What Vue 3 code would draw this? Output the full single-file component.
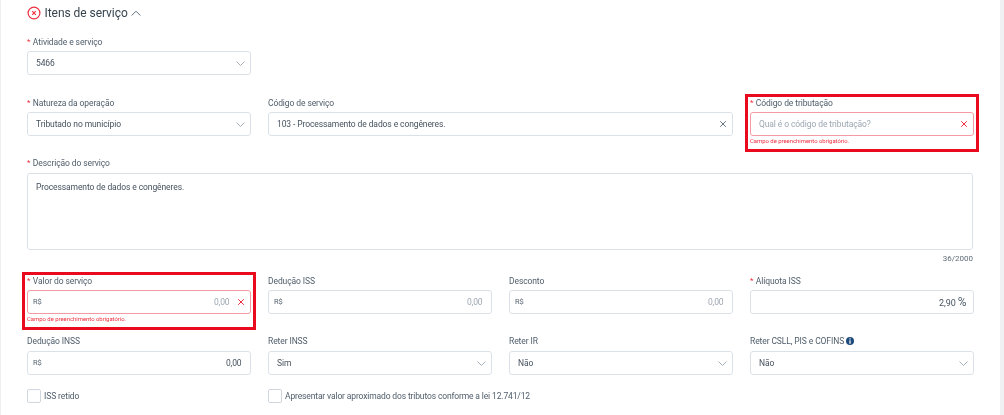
<script setup>
const rowD = [
  { label: 'Dedução INSS', kind: 'money', value: '0,00', dark: true },
  { label: 'Reter INSS', kind: 'select', value: 'Sim' },
  { label: 'Reter IR', kind: 'select', value: 'Não' },
  { label: 'Reter CSLL, PIS e COFINS', kind: 'select', value: 'Não', info: true },
]
</script>

<template>
  <div class="page">
    <main class="content">
      <header class="title">
        <svg class="err-icon" width="14" height="14" viewBox="0 0 14 14" fill="none">
          <circle cx="7" cy="7" r="5.9" stroke="#ee2e3e" stroke-width="1.2" />
          <path d="M5.2 5.2l3.6 3.6M8.8 5.2l-3.6 3.6" stroke="#ee2e3e" stroke-width="1.1" />
        </svg>
        <h2>Itens de serviço</h2>
        <svg width="10" height="6" viewBox="0 0 10 6" fill="none">
          <path d="M.7 5.5L5 1.2l4.3 4.3" stroke="#5f6f7f" stroke-width="1" />
        </svg>
      </header>

      <div class="grid row-a">
        <div class="field">
          <label><i>*</i>Atividade e serviço</label>
          <div class="box"><span>5466</span><svg class="chev" width="9" height="5" viewBox="0 0 9 5" fill="none"><path d="M.5.5l4 4 4-4" /></svg></div>
        </div>
      </div>

      <div class="grid row-b">
        <div class="field">
          <label><i>*</i>Natureza da operação</label>
          <div class="box"><span>Tributado no município</span><svg class="chev" width="9" height="5" viewBox="0 0 9 5" fill="none"><path d="M.5.5l4 4 4-4" /></svg></div>
        </div>
        <div class="field span2">
          <label>Código de serviço</label>
          <div class="box"><span>103 - Processamento de dados e congêneres.</span><svg class="x" width="8" height="8" viewBox="0 0 8 8" fill="none"><path d="M1.2 1.2l5.6 5.6M6.8 1.2L1.2 6.8" /></svg></div>
        </div>
        <div class="field flagged">
          <label><i>*</i>Código de tributação</label>
          <div class="box invalid"><span class="ph">Qual é o código de tributação?</span><svg class="x" width="8" height="8" viewBox="0 0 8 8" fill="none"><path d="M1.2 1.2l5.6 5.6M6.8 1.2L1.2 6.8" /></svg></div>
          <small>Campo de preenchimento obrigatório.</small>
        </div>
      </div>

      <div class="field desc">
        <label><i>*</i>Descrição do serviço</label>
        <div class="area">Processamento de dados e congêneres.</div>
        <div class="count">36/2000</div>
      </div>

      <div class="grid row-c">
        <div class="field flagged">
          <label><i>*</i>Valor do serviço</label>
          <div class="box invalid"><b>R$</b><span class="num ph">0,00</span><svg class="x" width="8" height="8" viewBox="0 0 8 8" fill="none"><path d="M1.2 1.2l5.6 5.6M6.8 1.2L1.2 6.8" /></svg></div>
          <small>Campo de preenchimento obrigatório.</small>
        </div>
        <div class="field">
          <label>Dedução ISS</label>
          <div class="box"><b>R$</b><span class="num ph">0,00</span></div>
        </div>
        <div class="field">
          <label>Desconto</label>
          <div class="box"><b>R$</b><span class="num ph">0,00</span></div>
        </div>
        <div class="field">
          <label><i>*</i>Alíquota ISS</label>
          <div class="box"><span class="num pct">2,90 <em>%</em></span></div>
        </div>
      </div>

      <div class="grid row-d">
        <div v-for="f in rowD" :key="f.label" class="field">
          <label>{{ f.label }}<svg v-if="f.info" class="info" width="8" height="8" viewBox="0 0 8 8"><circle cx="4" cy="4" r="4" fill="#1d4a7c" /><path d="M3.4 1.3h1.2v1.1H3.4zM3.4 3.2h1.2v3.5H3.4z" fill="#fff" /></svg></label>
          <div v-if="f.kind === 'money'" class="box"><b>R$</b><span class="num">{{ f.value }}</span></div>
          <div v-else class="box"><span>{{ f.value }}</span><svg class="chev" width="9" height="5" viewBox="0 0 9 5" fill="none"><path d="M.5.5l4 4 4-4" /></svg></div>
        </div>
      </div>

      <div class="grid row-e">
        <div class="check"><span class="tick"></span>ISS retido</div>
        <div class="check wide"><span class="tick"></span>Apresentar valor aproximado dos tributos conforme a lei 12.741/12</div>
      </div>
    </main>
  </div>
</template>

<style>
html, body { margin: 0; background: #fff; }
</style>

<style scoped>
.page {
  width: 1004px;
  height: 415px;
  overflow: hidden;
  box-sizing: border-box;
  background: #fff;
  border-left: 1px solid #f0f0f0;
  border-right: 4px solid #f0f1f3;
  font-family: Roboto, "Liberation Sans", sans-serif;
  color: #4d5a68;
  letter-spacing: -0.1px;
}
.content { padding-left: 26px; box-sizing: border-box; width: 972px; filter: blur(0.3px); }
.title {
  display: flex;
  align-items: center;
  height: 26px;
  gap: 3.5px;
}
.title h2 {
  margin: 0;
  font-size: 12px;
  font-weight: 400;
  color: #37444f;
  line-height: 26px;
  letter-spacing: -0.05px;
}
.grid {
  display: grid;
  grid-template-columns: repeat(4, 223.5px);
  column-gap: 17.5px;
}
.row-a { margin-top: 9px; }
.row-b { margin-top: 21px; height: 38px; }
.row-c { margin-top: 9px; height: 40px; }
.row-d { margin-top: 20px; }
.row-e { margin-top: 13.5px; }
.span2 { grid-column: span 2; }
.field { position: relative; min-width: 0; }
label {
  display: flex;
  align-items: center;
  height: 14px;
  margin-bottom: 2px;
  font-size: 8.5px;
  color: #4f5d6a;
  line-height: 14px;
}
.row-d label, .desc label { margin-bottom: 3px; }
label i {
  color: #ee2e3e;
  font-style: normal;
  margin-right: 2.5px;
  font-size: 8px;
}
.info { margin-left: 2px; }
.box {
  height: 24px;
  box-sizing: border-box;
  border: 1px solid #dbe1e8;
  border-radius: 3px;
  display: flex;
  align-items: center;
  padding: 0 8px;
  font-size: 8.5px;
  color: #46525e;
  background: #fff;
}
.box span { flex: 1; white-space: nowrap; }
.box b { font-weight: 400; font-size: 7.5px; color: #55626e; margin-top: -1px; margin-left: -3px; }
.num { text-align: right; }
.pct { margin-right: -2px; font-size: 9px; }
.num em { font-style: normal; font-size: 12px; color: #55626e; }
.ph { color: #9ca7b2; }
.chev path { stroke: #a5b0bb; stroke-width: 1; }
.chev { margin-right: -3px; margin-left: 6px; }
.x { margin-left: 7px; margin-right: -3px; }
.x path { stroke: #6a7784; stroke-width: 1; }
.invalid { border-color: #f59aa2; }
.invalid .x path { stroke: #ee2e3e; }
small {
  display: block;
  font-size: 5.9px;
  color: #ee2e3e;
  line-height: 10px;
  letter-spacing: 0;
}
.flagged::after {
  content: "";
  position: absolute;
  inset: -2px -5.5px -6px -5px;
  border: 3px solid #ea0a1e;
  pointer-events: none;
}
.desc { margin-top: 22px; }
.area {
  height: 77px;
  box-sizing: border-box;
  border: 1px solid #dbe1e8;
  border-radius: 3px;
  padding: 6px 8px;
  font-size: 8.5px;
  line-height: 14px;
  color: #46525e;
}
.count {
  text-align: right;
  font-size: 8px;
  color: #5f6c78;
  line-height: 12px;
  margin-top: 3px;
  letter-spacing: 0;
}
.check {
  display: flex;
  align-items: center;
  gap: 3px;
  font-size: 8.5px;
  color: #4f5d6a;
  white-space: nowrap;
}
.wide { grid-column: span 3; letter-spacing: -0.14px; }
.tick {
  width: 14px;
  height: 14px;
  box-sizing: border-box;
  border: 1px solid #cfd6de;
  border-radius: 2px;
  background: #fff;
}
</style>
